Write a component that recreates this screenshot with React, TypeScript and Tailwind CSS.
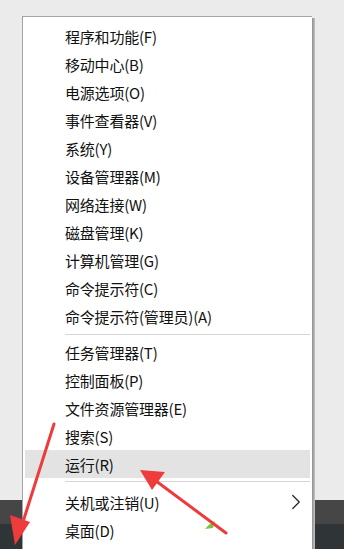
import { ChevronRight } from "lucide-react";

type Item = { label: string; hover?: boolean; sub?: boolean };

const GROUPS: Item[][] = [
  [
    { label: "程序和功能(F)" },
    { label: "移动中心(B)" },
    { label: "电源选项(O)" },
    { label: "事件查看器(V)" },
    { label: "系统(Y)" },
    { label: "设备管理器(M)" },
    { label: "网络连接(W)" },
    { label: "磁盘管理(K)" },
    { label: "计算机管理(G)" },
    { label: "命令提示符(C)" },
    { label: "命令提示符(管理员)(A)" },
  ],
  [
    { label: "任务管理器(T)" },
    { label: "控制面板(P)" },
    { label: "文件资源管理器(E)" },
    { label: "搜索(S)" },
    { label: "运行(R)", hover: true },
  ],
  [{ label: "关机或注销(U)", sub: true }, { label: "桌面(D)" }],
];

function MenuRow({ item }: { item: Item }) {
  return (
    <div
      className={`h-[28px] flex items-center pl-[40px] pr-[1px] ${
        item.hover ? "bg-[#e3e3e3]" : ""
      }`}
    >
      <span className="flex-1 text-[15px] leading-none text-[#111] tracking-[-0.2px]">
        {item.label}
      </span>
      {item.sub && <ChevronRight className="w-[26px] h-[26px] text-[#222]" strokeWidth={1.1} />}
    </div>
  );
}

export default function App() {
  return (
    <div
      className="relative w-[344px] h-[549px] overflow-hidden bg-[#ebebeb] flex flex-col"
      style={{ fontFamily: '"Microsoft YaHei", "Noto Sans CJK SC", "Noto Sans", sans-serif' }}
    >
      {/* desktop + taskbar */}
      <div className="flex-1" />
      <div className="h-[24px] bg-[#464646]" />
      <div className="h-[25px] bg-[#2f3436]" />

      {/* context menu */}
      <div className="absolute left-[22px] top-[16px] bottom-0 w-[293px] flex">
        <div className="flex-1 bg-white border-l border-t border-[#a3a3a3] pt-[5px] px-[2px]">
          {GROUPS.map((group, gi) => (
            <div key={gi}>
              {gi === 1 && (
                <div className="h-[8px] flex items-center pl-[40px]">
                  <div className="h-px w-full bg-[#d6d6d6]" />
                </div>
              )}
              {gi === 2 && (
                <div className="h-[10px] pt-[3px] pl-[40px]">
                  <div className="h-px w-full bg-[#d6d6d6]" />
                </div>
              )}
              {group.map((item) => (
                <MenuRow key={item.label} item={item} />
              ))}
            </div>
          ))}
        </div>
        <div className="w-[3px] mt-[2px] bg-gradient-to-r from-[#8e8e8e] to-[#c4c4c4]" />
      </div>

      {/* annotation arrows */}
      <svg className="absolute inset-0 pointer-events-none" width="344" height="549" viewBox="0 0 344 549">
        <line x1="54" y1="424" x2="22" y2="525" stroke="#ee3b3b" strokeWidth="3" strokeLinecap="round" />
        <polygon points="15,545 10,515 30,522" fill="#ee3b3b" />
        <path d="M205 529 q5 -6 10 -8 l-2 7 z" fill="#7cc242" />
        <line x1="226" y1="533" x2="156" y2="481" stroke="#ee3b3b" strokeWidth="3" strokeLinecap="round" />
        <polygon points="140,470 165,472 152,490" fill="#ee3b3b" />
      </svg>
    </div>
  );
}
